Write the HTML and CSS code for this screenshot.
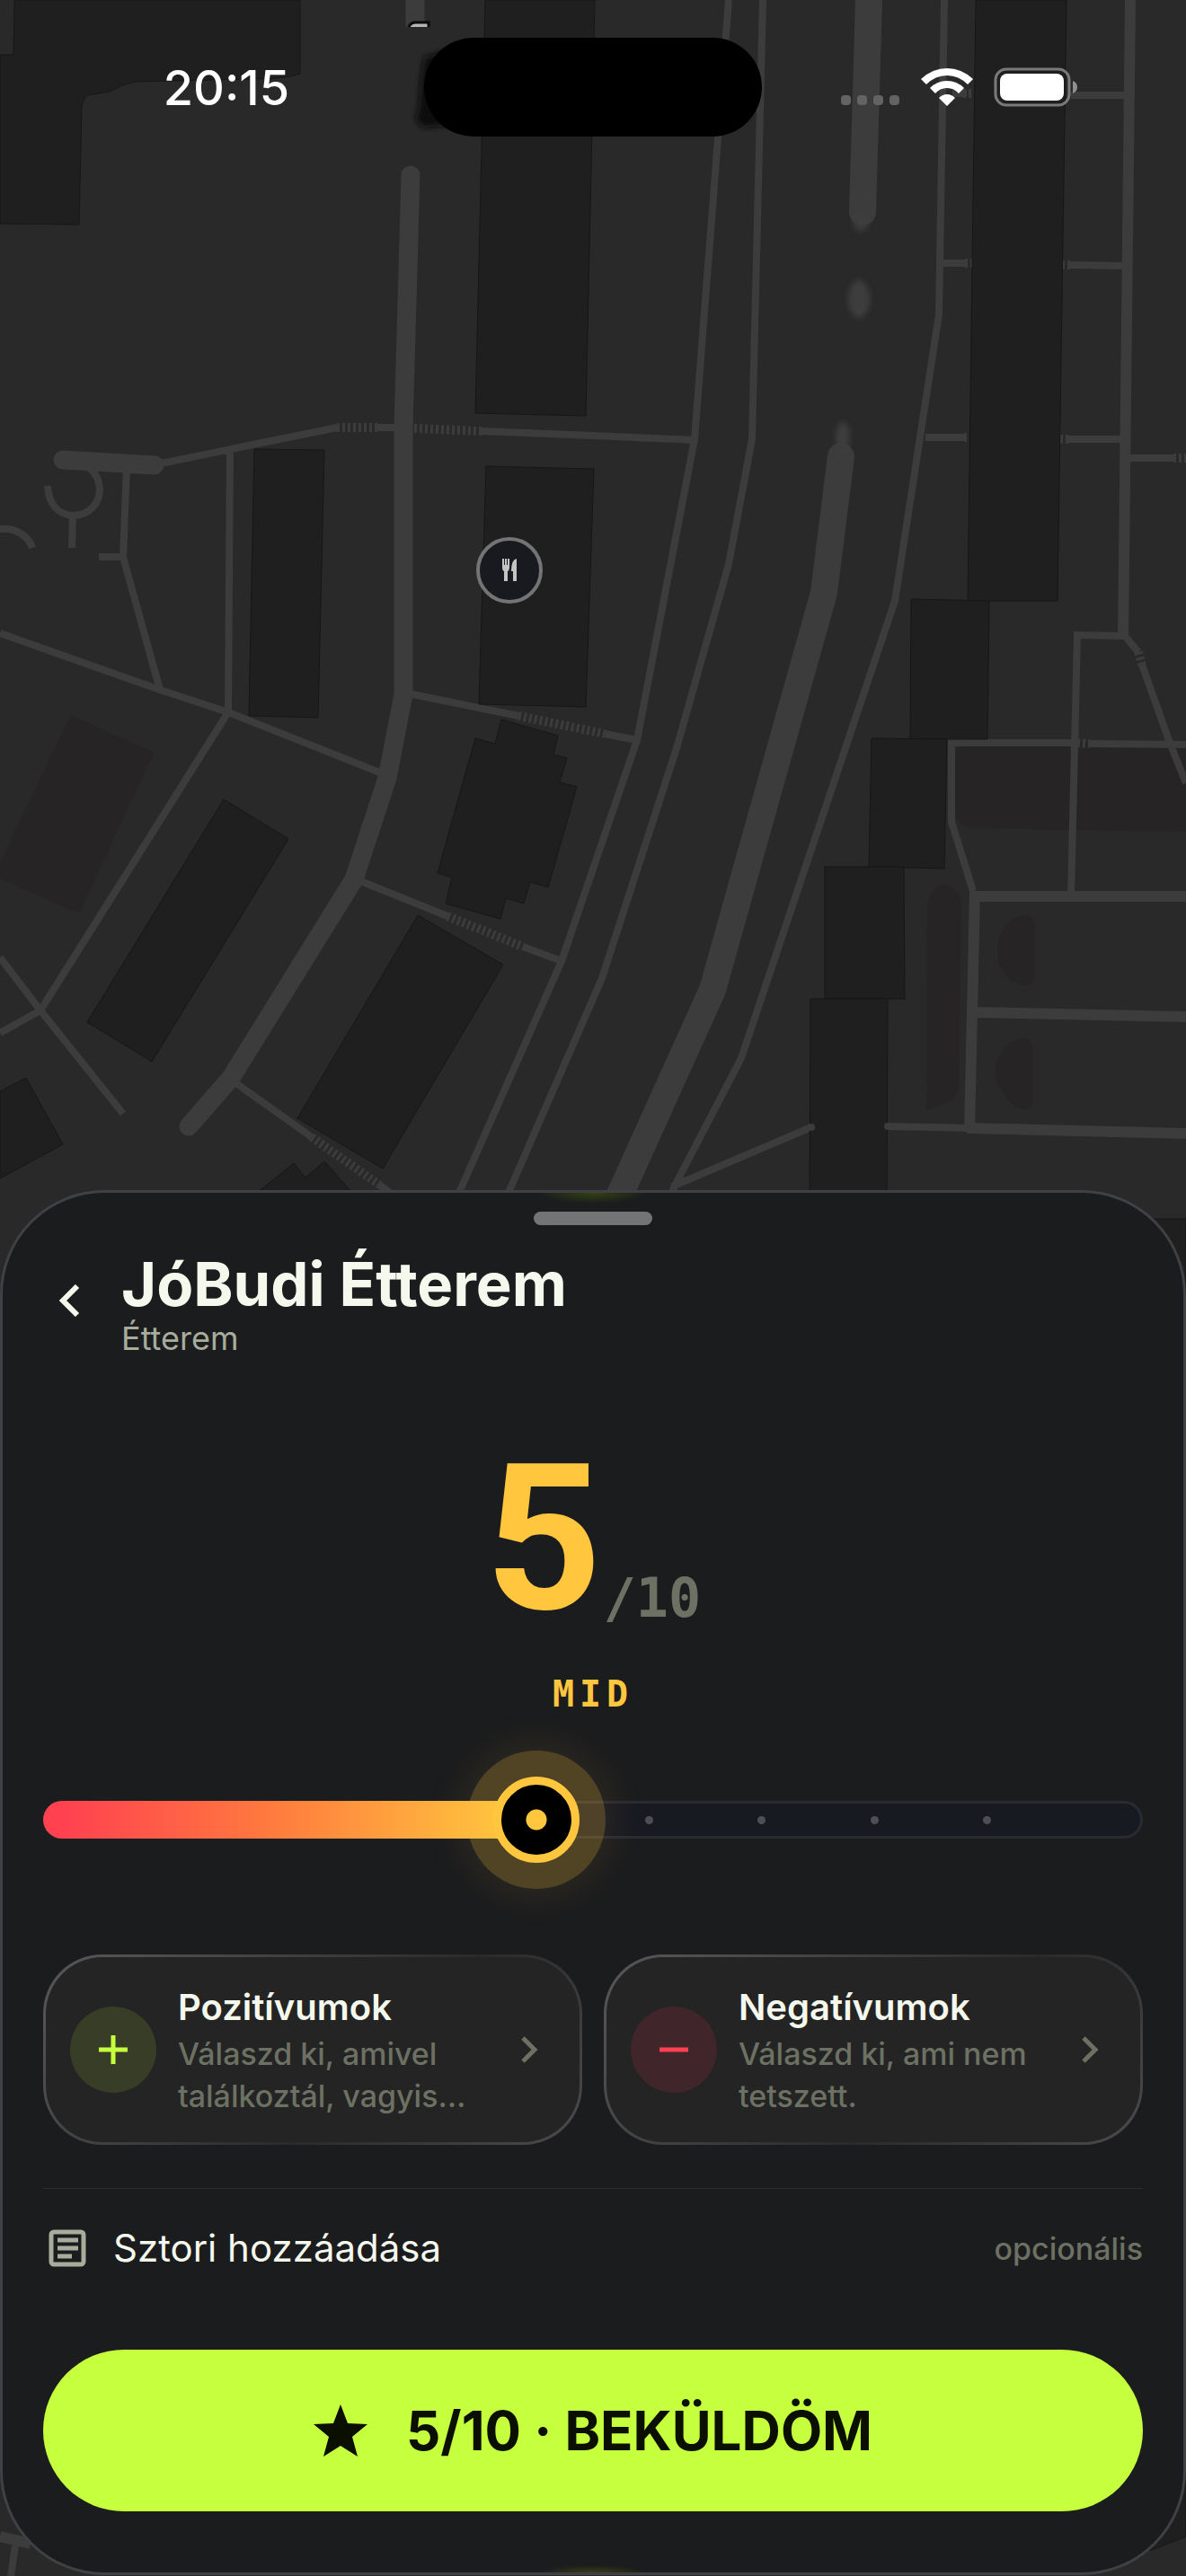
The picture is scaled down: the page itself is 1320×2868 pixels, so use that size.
FILE: index.html
```html
<!DOCTYPE html>
<html lang="hu">
<head>
<meta charset="utf-8">
<meta name="viewport" content="width=device-width, initial-scale=1">
<title>JóBudi Étterem – értékelés</title>
<link rel="stylesheet" href="styles.css">
</head>
<body>
<div class="screen">
  <svg class="map" viewBox="0 0 1320 2868" preserveAspectRatio="xMidYMin slice" aria-hidden="true">
    <defs>
      <filter id="soft" x="-50%" y="-50%" width="200%" height="200%"><feGaussianBlur stdDeviation="3"/></filter>
    </defs>
    <!-- parks -->
    <g class="park">
      <path d="M79 796 171 838 88 1017 0 978V960Z"/>
      <path d="M1063 840q2-12 16-14L1320 829v97l-240-4q-12-2-17-14Z"/>
      <path d="M1032 1010q2-24 20-25 16 2 18 24l-3 200q-1 14-14 19-16 7-22 8Z"/>
      <path d="M1152 1030v58q-2 10-10 9-32-5-32-39 2-34 30-39 10-1 12 11Z"/>
      <path d="M1150 1168v58q-2 10-10 9-20-3-33-37 2-36 31-42 10 0 12 12Z"/>
    </g>
    <!-- streets -->
    <g class="road">
      <path class="w20" d="M462 0V30" />
      <path class="w20 round" d="M457 195 449 476V773L431 866 394 979 257 1200 210 1254"/>
      <path class="w20 round" d="M70 512 172 518"/>
      <path class="w30 round" d="M967 0 960 236"/>
      <path class="w30 round" d="M936 508 917 660 793 1102 690 1330"/>
      <path class="w12" d="M1258 0 1250 712M1080 998H1320M1085 992 1079 1260M1086 1127 1320 1132M1076 1256 1320 1262M0 2824 34 2832"/>
      <path class="w8" d="M179 516 375 476M420 476H449M536 480 660 485 773 490M141 520 137 620H110M137 620 178 768M256 500 254 796M53 541C54 562 66 574 82 574C100 573 111 560 111 545Q110 528 98 520M81 574 80 610M0 589H10Q30 593 36 610"/>
      <path class="w8" d="M0 705 178 768 254 793 425 861M254 793 45 1125 0 1150M0 1066 45 1125 137 1240"/>
      <path class="w8" d="M449 771 577 797M673 817 709 824M394 978 498 1020M582 1054 625 1070M257 1202 347 1266M422 1319 437 1330"/>
      <path class="w8" d="M811 0 773 489 709 824 625 1070 510 1330M849 0 837 489 811 628 753 833 670 1089 565 1330"/>
      <path class="w8" d="M1051 0 1045 350 996 669 825 1178 748 1326M748 1321 903 1255"/>
      <path class="w8" d="M1048 293H1076M1191 295 1252 296M1030 487H1074M1189 489H1250M1192 106H1256M1250 510H1306M1060 104H1076"/>
      <path class="w8" d="M1250 708 1199 707 1192 998M1252 708 1267 726M1271 740 1302 827 1320 872M1199 827H1059V915L1083 992M1213 828 1320 829M987 1254 1080 1256M17 2834 12 2868"/>
      <path class="steps" d="M375 476H420M461 477 536 480M577 797 673 817M498 1020 582 1054M347 1266 422 1319M1199 827 1213 828M1267 726 1271 740M1074 293H1084M1182 295H1192M1073 487H1081M1180 489H1190M1306 510H1320M1072 104H1084"/>
      <ellipse class="smudge" cx="956" cy="333" rx="12" ry="21"/>
      <ellipse class="smudge" cx="958" cy="248" rx="8" ry="9"/>
      <ellipse class="smudge" cx="938" cy="486" rx="8" ry="16"/>
    </g>
    <!-- buildings -->
    <g class="building">
      <path d="M16 0H334V82Q320 88 280 88L150 91Q135 94 122 102L98 106Q91 110 91 122L88 250 0 249V61H15Z"/>
      <path d="M540 0H662L652 463 529 460Z"/>
      <path d="M541 519 661 522 652 787 533 784Z"/>
      <path d="M283 500 361 501 354 799 277 797Z"/>
      <path d="M249 890 321 934 169 1182 97 1138Z"/>
      <path d="M0 1215 29 1200 70 1274 0 1312Z"/>
      <path d="M286 1328 327 1295 340 1311 361 1293 392 1328Z"/>
      <path d="M465 1019 560 1074 426 1301 331 1245Z"/>
      <path d="M558 801 621 819 616 840 631 844 623 871 642 876 610 988 590 982 583 1006 563 1000 557 1023 496 1006 503 977 487 972 529 822 551 828Z"/>
      <path d="M1086 0H1187L1177 669H1077Z"/>
      <path d="M1014 667 1101 669 1099 823H1013Z"/>
      <path d="M970 822 1054 823 1051 967 967 965Z"/>
      <path d="M918 965H1006L1007 1112H918Z"/>
      <path d="M902 1112H988L987 1330H901Z"/>
      <path d="M1270 1357H1320V2824L1280 2840Z"/>
    </g>
    <path class="shade" d="M500 55 472 64 468 90 466 120 462 132 470 142 500 140Z"/>
    <path class="road round w8" d="M902 1255h1M988 1254h1"/>
    <path class="label" d="M455 30q2-5 8-5h14v5"/>
    <!-- restaurant pin -->
    <g class="pin">
      <circle cx="567" cy="635" r="35"/>
      <path class="cutlery" d="M559 622h2v7h1v-7h2v7h1v-7h2v10q0 3-2 4v11h-4v-11q-2-1-2-4ZM575 622v25h-4v-11h-2q0-13 6-14Z"/>
    </g>
  </svg>

  <header class="status">
    <time class="clock">20:15</time>
    <div class="island"></div>
    <div class="indicators">
      <svg class="signal" viewBox="0 0 66 12" aria-hidden="true"><rect width="11" height="11" rx="4"/><rect x="18" width="11" height="11" rx="4"/><rect x="36" width="11" height="11" rx="4"/><rect x="54" width="11" height="11" rx="4"/></svg>
      <svg class="wifi" viewBox="0 0 58 43" aria-hidden="true"><path d="M0 13Q13 1 29 1T58 13L52 19Q42 9 29 9T6 19ZM10 23Q18 15 29 15T48 23L42 29Q37 23 29 23T16 29ZM20 34Q24 30 29 30T38 34L29 43Z"/></svg>
      <svg class="battery" viewBox="0 0 94 44" aria-hidden="true"><rect class="shell" x="2" y="2" width="82" height="40" rx="12"/><rect class="charge" x="7" y="7" width="71" height="30" rx="8"/><path class="nub" d="M88 15q5 2 5 7t-5 7Z"/></svg>
    </div>
  </header>

  <main class="sheet">
    <div class="handle"></div>
    <div class="place">
      <button class="back" type="button" aria-label="Vissza"><svg viewBox="0 0 24 36"><path d="M21 2 5 18 21 34"/></svg></button>
      <div class="place-text">
        <h1 class="title">JóBudi Étterem</h1>
        <p class="kind">Étterem</p>
      </div>
    </div>

    <p class="score"><span class="score-value">5</span><span class="score-max">/10</span></p>
    <p class="verdict">MID</p>

    <div class="slider">
      <div class="track"></div>
      <div class="ticks"><i></i><i></i><i></i><i></i><i></i><i></i><i></i><i></i><i></i><i></i></div>
      <div class="halo" style="--pos: 0.444"></div>
      <div class="fill" style="--pos: 0.444"></div>
      <input class="range" type="range" min="1" max="10" step="1" value="5" aria-label="Pontszám">
    </div>

    <div class="cards">
      <button class="card" type="button">
        <span class="badge plus"><svg viewBox="0 0 32 32"><path d="M16 0V32M0 16H32"/></svg></span>
        <span class="card-text"><span class="card-title">Pozitívumok</span><span class="card-note">Válaszd ki, amivel<br>találkoztál, vagyis…</span></span>
        <svg class="chevron" viewBox="0 0 20 32"><path d="M3 3 16 16 3 29"/></svg>
      </button>
      <button class="card" type="button">
        <span class="badge minus"><svg viewBox="0 0 32 32"><path d="M0 16H32"/></svg></span>
        <span class="card-text"><span class="card-title">Negatívumok</span><span class="card-note">Válaszd ki, ami nem<br>tetszett.</span></span>
        <svg class="chevron" viewBox="0 0 20 32"><path d="M3 3 16 16 3 29"/></svg>
      </button>
    </div>

    <button class="story" type="button">
      <svg class="note-icon" viewBox="0 0 42 42"><rect x="3" y="3" width="36" height="36" rx="3"/><path d="M10 12H33M10 21H33M10 30H26"/></svg>
      <span class="story-label">Sztori hozzáadása</span>
      <span class="story-hint">opcionális</span>
    </button>

    <button class="submit" type="button">
      <svg class="star" viewBox="0 0 60 58"><path d="M30 0 38 21 60 22 43 36 49 58 30 46 11 58 17 36 0 22 22 21Z"/></svg>
      <span>5/10 · BEKÜLDÖM</span>
    </button>
  </main>
</div>
</body>
</html>
```

FILE: styles.css
```css
:root {
  --bg: #292929;
  --road: #3c3c3c;
  --building: #1f1f1f;
  --sheet: #1b1c1e;
  --edge: #404145;
  --text: #f5f8ec;
  --muted: #a8ac9c;
  --dim: #6c7163;
  --amber: #ffc63e;
  --lime: #c6ff3d;
  --red: #ff4150;
  --thumb: 96px;
}

* { box-sizing: border-box; }

body {
  margin: 0;
  background: var(--bg);
  color: var(--text);
  font-family: Inter, "Liberation Sans", sans-serif;
}

h1, p { margin: 0; }

button {
  border: 0;
  padding: 0;
  background: none;
  color: inherit;
  font: inherit;
  text-align: left;
  cursor: pointer;
}

svg { display: block; }

.screen {
  position: relative;
  display: flex;
  flex-direction: column;
  justify-content: space-between;
  min-height: 100vh;
  padding-bottom: 1px;
  overflow: hidden;
}

/* Map */
.map {
  position: absolute;
  inset: 0;
  width: 100%;
  height: 100%;
}
.park { fill: #272425; }
.road { fill: none; stroke: var(--road); }
.building { fill: var(--building); stroke: #171717; stroke-width: 1; }
.w8 { stroke-width: 8; }
.w12 { stroke-width: 12; }
.w20 { stroke-width: 21; }
.w30 { stroke-width: 30; }
.round { stroke-linecap: round; }
.steps { stroke-width: 10; stroke-dasharray: 3 3; }
.smudge { fill: var(--road); stroke: none; filter: url(#soft); }
.shade { fill: #101010; filter: url(#soft); }
.label { fill: #b5b5b5; stroke: #0a0a0a; stroke-width: 3; }
.pin circle { fill: #181a20; stroke: #747474; stroke-width: 4; }
.cutlery { fill: #c4c4c4; }

/* Status bar */
.status {
  position: relative;
  display: grid;
  grid-template-columns: 1fr 376px 1fr;
  padding-top: 42px;
}
.clock {
  justify-self: center;
  padding: 2px 0 0 32px;
  color: #fff;
  font-size: 54px;
  font-weight: 500;
  line-height: 108px;
}
.island {
  height: 110px;
  border-radius: 55px;
  background: #000;
}
.indicators {
  display: flex;
  justify-content: flex-end;
  gap: 23px;
  padding: 33px 120px 0 0;
}
.signal { width: 66px; height: 12px; margin-top: 31px; fill: #636363; }
.wifi { width: 58px; height: 43px; fill: #fff; }
.battery { width: 94px; height: 44px; }
.shell { fill: none; stroke: #7a7a7a; stroke-width: 3; }
.charge { fill: #fff; }
.nub { fill: #8f8f8f; }

/* Sheet */
.sheet {
  position: relative;
  display: flex;
  flex-direction: column;
  padding: 21px 45px 68px;
  border: 3px solid var(--edge);
  border-radius: 116px;
  background:
    radial-gradient(ellipse 60px 12px at 50% 0, #344211, transparent),
    radial-gradient(ellipse 60px 8px at 50% 100%, #3a3d18, transparent),
    var(--sheet);
}
.handle {
  align-self: center;
  width: 132px;
  height: 15px;
  border-radius: 8px;
  background: #727475;
}
.place {
  display: flex;
  gap: 46px;
  margin-top: 30px;
}
.back { width: 41px; padding: 0 0 12px 17px; }
.back svg {
  width: 24px;
  height: 36px;
  fill: none;
  stroke: var(--text);
  stroke-width: 6;
}
.title { font-size: 67px; font-weight: 700; line-height: 72px; }
.kind { color: var(--muted); font-size: 36px; line-height: 48px; }

.score {
  display: flex;
  justify-content: center;
  align-items: flex-end;
  gap: 2px;
  margin-top: 90px;
  font-weight: 700;
}
.score-value {
  color: var(--amber);
  font-family: Roboto, sans-serif;
  font-size: 226px;
  line-height: 220px;
}
.score-max {
  padding-bottom: 15px;
  color: var(--dim);
  font-family: "DejaVu Sans Mono", monospace;
  font-size: 60px;
  line-height: 60px;
}
.verdict {
  margin-top: 38px;
  color: var(--amber);
  font-family: "DejaVu Sans Mono", monospace;
  font-size: 40px;
  font-weight: 700;
  letter-spacing: 6px;
  line-height: 48px;
  text-align: center;
}

/* Slider */
.slider {
  position: relative;
  display: grid;
  align-items: center;
  height: var(--thumb);
  margin-top: 68px;
}
.slider > * { grid-area: 1 / 1; }
.track {
  height: 42px;
  border: 3px solid #2a2b31;
  border-radius: 21px;
  background: #181a22;
}
.ticks {
  display: flex;
  justify-content: space-between;
  padding: 0 44px;
}
.ticks i {
  width: 9px;
  height: 9px;
  border-radius: 50%;
  background: #4e4f54;
}
.ticks i:last-child { visibility: hidden; }
.halo {
  position: absolute;
  top: -29px;
  left: calc((100% - var(--thumb)) * var(--pos) - 29px);
  width: 154px;
  height: 154px;
  border-radius: 50%;
  background: rgb(255 198 62 / 24%);
  box-shadow: 0 0 50px rgb(255 198 62 / 12%);
}
.fill {
  position: relative;
  width: calc((100% - var(--thumb)) * var(--pos) + 48px);
  height: 42px;
  border-radius: 21px 0 0 21px;
  background: linear-gradient(90deg, var(--red) 4%, #ff7a3e 46%, var(--amber) 94%);
}
.range {
  position: relative;
  width: 100%;
  height: var(--thumb);
  margin: 0;
  background: none;
  appearance: none;
}
.range::-webkit-slider-thumb {
  width: var(--thumb);
  height: var(--thumb);
  border: 9px solid var(--amber);
  border-radius: 50%;
  background: radial-gradient(circle, var(--amber) 11px, #000 12px);
  appearance: none;
}

/* Pros and cons */
.cards {
  display: grid;
  grid-template-columns: 1fr 1fr;
  gap: 24px;
  margin-top: 102px;
}
.card {
  display: flex;
  align-items: center;
  gap: 24px;
  padding: 28px 46px 28px 27px;
  border: 3px solid transparent;
  border-radius: 66px;
  background:
    linear-gradient(#242424, #242424) padding-box,
    linear-gradient(135deg, #58585a, #3c3c3d 40%, #2a2a2b 60%, #4c4c4e) border-box;
}
.badge {
  display: grid;
  flex: none;
  place-items: center;
  width: 96px;
  height: 96px;
  border-radius: 50%;
}
.badge svg { width: 32px; height: 32px; fill: none; stroke-width: 5; }
.plus { background: #373d26; }
.plus svg { stroke: var(--lime); }
.minus { background: #40262a; }
.minus svg { stroke: var(--red); }
.card-text { flex: 1; white-space: nowrap; }
.card-title { display: block; font-size: 40px; font-weight: 600; line-height: 56px; }
.card-note {
  display: block;
  color: var(--dim);
  font-size: 34px;
  font-weight: 500;
  line-height: 47px;
}
.chevron {
  flex: none;
  width: 20px;
  height: 32px;
  fill: none;
  stroke: var(--dim);
  stroke-width: 5;
}

/* Story row */
.story {
  display: flex;
  align-items: center;
  margin-top: 48px;
  padding: 40px 0;
  border-top: 1px solid #2c2d2f;
}
.note-icon {
  width: 42px;
  height: 42px;
  margin: 0 30px 0 6px;
  fill: none;
  stroke: var(--muted);
  stroke-width: 5;
}
.story-label { flex: 1; font-size: 42px; line-height: 52px; }
.story-hint { color: var(--dim); font-size: 34px; font-weight: 500; }

.submit {
  display: flex;
  align-items: center;
  justify-content: center;
  gap: 43px;
  height: 180px;
  margin-top: 47px;
  border-radius: 90px;
  background: var(--lime);
  color: #0b0f00;
  font-size: 60px;
  font-weight: 700;
}
.star { width: 60px; height: 58px; fill: #0b0f00; }
```
